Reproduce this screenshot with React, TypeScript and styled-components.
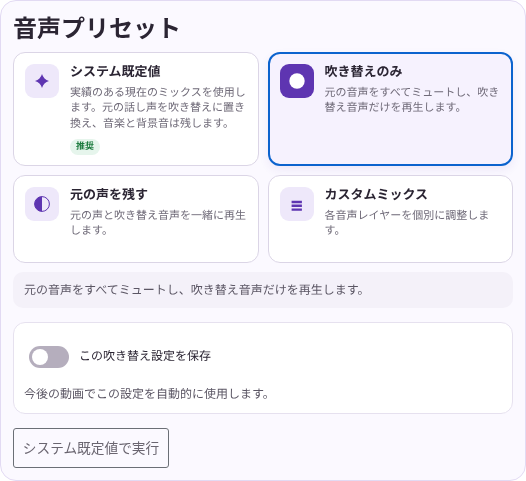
import styled, { createGlobalStyle } from "styled-components";

const GlobalStyle = createGlobalStyle`
    html, body {
        margin: 0;
        padding: 0;
        background: #ffffff;
    }
    * {
        box-sizing: border-box;
    }
`

type PresetProps = {
    icon: React.ReactNode;
    title: string;
    text: string;
    badge?: string;
    active?: boolean;
}

const Preset = ({icon, title, text, badge, active}: PresetProps) => {
    return (
        <PresetCard $active={active}>
            <IconTile $active={active}>{icon}</IconTile>
            <PresetBody>
                <PresetTitle>{title}</PresetTitle>
                <PresetText>{text}</PresetText>
                {badge && <Badge>{badge}</Badge>}
            </PresetBody>
        </PresetCard>
    );
};

const App = () => {
    return (
        <>
            <GlobalStyle/>
            <Panel lang="ja">
                <Heading>音声プリセット</Heading>
                <PresetGrid>
                    <Preset
                        icon={<Glyph $size={14} viewBox="0 0 14 14"><path d="M7 0 Q8.6 5.4 14 7 Q8.6 8.6 7 14 Q5.4 8.6 0 7 Q5.4 5.4 7 0 Z" fill="#5e35b1"/></Glyph>}
                        title="システム既定値"
                        text="実績のある現在のミックスを使用します。元の話し声を吹き替えに置き換え、音楽と背景音は残します。"
                        badge="推奨"
                    />
                    <Preset
                        active
                        icon={<Glyph $size={16} viewBox="0 0 16 16"><circle cx="8" cy="8" r="7.7" fill="#ffffff"/></Glyph>}
                        title="吹き替えのみ"
                        text="元の音声をすべてミュートし、吹き替え音声だけを再生します。"
                    />
                    <Preset
                        icon={<Glyph $size={16} viewBox="0 0 16 16"><circle cx="8" cy="8" r="7.4" fill="none" stroke="#5e35b1" strokeWidth="1"/><path d="M8 0.6 A7.4 7.4 0 0 0 8 15.4 Z" fill="#5e35b1"/></Glyph>}
                        title="元の声を残す"
                        text="元の声と吹き替え音声を一緒に再生します。"
                    />
                    <Preset
                        icon={<Glyph $size={14} viewBox="0 0 14 14"><path d="M1.6 3.8 H11.9 V6.2 H1.6 Z M1.6 7.6 H11.9 V10 H1.6 Z M1.6 11.4 H11.9 V13.8 H1.6 Z" fill="#5e35b1"/></Glyph>}
                        title="カスタムミックス"
                        text="各音声レイヤーを個別に調整します。"
                    />
                </PresetGrid>
                <InfoNote>元の音声をすべてミュートし、吹き替え音声だけを再生します。</InfoNote>
                <SaveCard>
                    <ToggleRow>
                        <Toggle><ToggleKnob/></Toggle>
                        <ToggleLabel>この吹き替え設定を保存</ToggleLabel>
                    </ToggleRow>
                    <SaveHint>今後の動画でこの設定を自動的に使用します。</SaveHint>
                </SaveCard>
                <RunButton>システム既定値で実行</RunButton>
            </Panel>
        </>
    );
};

export default App;

const Panel = styled.div`
    width: 526px;
    height: 481px;
    padding: 12px;
    display: flex;
    flex-direction: column;
    align-items: stretch;
    background: #fbf9ff;
    border: 1px solid #e2daf3;
    border-radius: 16px;
    font-family: Inter, "Noto Sans CJK JP", sans-serif;
    text-rendering: geometricPrecision;
    will-change: transform;
    color: #2b2533;
`

const Heading = styled.h2`
    margin: 0 0 9px;
    height: 30px;
    font-size: 24px;
    line-height: 32px;
    font-weight: 700;
    color: #2b2533;
`

const PresetGrid = styled.div`
    display: grid;
    grid-template-columns: 1fr 1fr;
    grid-template-rows: 114px 88px;
    gap: 9px;
`

const PresetCard = styled.div<{ $active?: boolean }>`
    display: flex;
    align-items: flex-start;
    gap: 11px;
    padding: ${({$active}) => $active ? "10px" : "11px"};
    border-radius: 12px;
    background: ${({$active}) => $active ? "#f6f2fe" : "#ffffff"};
    border: ${({$active}) => $active ? "2px solid #0b63ce" : "1px solid #dbd5e6"};
    box-shadow: ${({$active}) => $active ? "0 4px 10px rgba(94, 53, 177, 0.08)" : "none"};
`

const IconTile = styled.div<{ $active?: boolean }>`
    flex: none;
    width: 34px;
    height: 34px;
    display: flex;
    align-items: center;
    justify-content: center;
    border-radius: 9px;
    background: ${({$active}) => $active ? "#5e35b1" : "#eee8fa"};
`

const Glyph = styled.svg<{ $size: number }>`
    width: ${({$size}) => $size}px;
    height: ${({$size}) => $size}px;
    display: block;
`

const PresetBody = styled.div`
    flex: 1;
    min-width: 0;
`

const PresetTitle = styled.div`
    font-size: 13px;
    line-height: 16px;
    font-weight: 700;
    color: #2b2533;
`

const PresetText = styled.div`
    margin-top: 5px;
    font-size: 11px;
    line-height: 15.4px;
    color: #6f6a78;
`

const Badge = styled.span`
    display: inline-block;
    margin-top: 8px;
    padding: 0 6px;
    height: 16px;
    border-radius: 8px;
    font-size: 9px;
    line-height: 16px;
    font-weight: 700;
    color: #1b7a3d;
    background: #e6f5ec;
`

const InfoNote = styled.div`
    margin-top: 9px;
    height: 36px;
    padding: 0 11px 2px;
    display: flex;
    align-items: center;
    border-radius: 10px;
    background: #f4f1f9;
    font-size: 12px;
    color: #5b5664;
`

const SaveCard = styled.div`
    margin-top: 14px;
    height: 92px;
    padding: 0 10px;
    display: flex;
    flex-direction: column;
    background: #ffffff;
    border: 1px solid #e6e1ef;
    border-radius: 12px;
`

const ToggleRow = styled.div`
    display: flex;
    align-items: center;
    gap: 10px;
    height: 22px;
    margin: 23px 0 0 5px;
`

const Toggle = styled.div`
    position: relative;
    width: 40px;
    height: 22px;
    border-radius: 11px;
    background: #b5aebd;
`

const ToggleKnob = styled.div`
    position: absolute;
    top: 3px;
    left: 3px;
    width: 16px;
    height: 16px;
    border-radius: 50%;
    background: #ffffff;
`

const ToggleLabel = styled.span`
    font-size: 12px;
    line-height: 18px;
    margin-bottom: 3px;
    color: #2b2533;
`

const SaveHint = styled.div`
    margin-top: 18px;
    font-size: 12px;
    line-height: 16px;
    color: #5b5664;
`

const RunButton = styled.button`
    align-self: flex-start;
    margin-top: 14px;
    width: 156px;
    height: 40px;
    padding: 0 0 2px;
    background: transparent;
    border: 1px solid #6b6f76;
    border-radius: 3px;
    font-family: inherit;
    font-size: 13.7px;
    color: #6a6570;
`
